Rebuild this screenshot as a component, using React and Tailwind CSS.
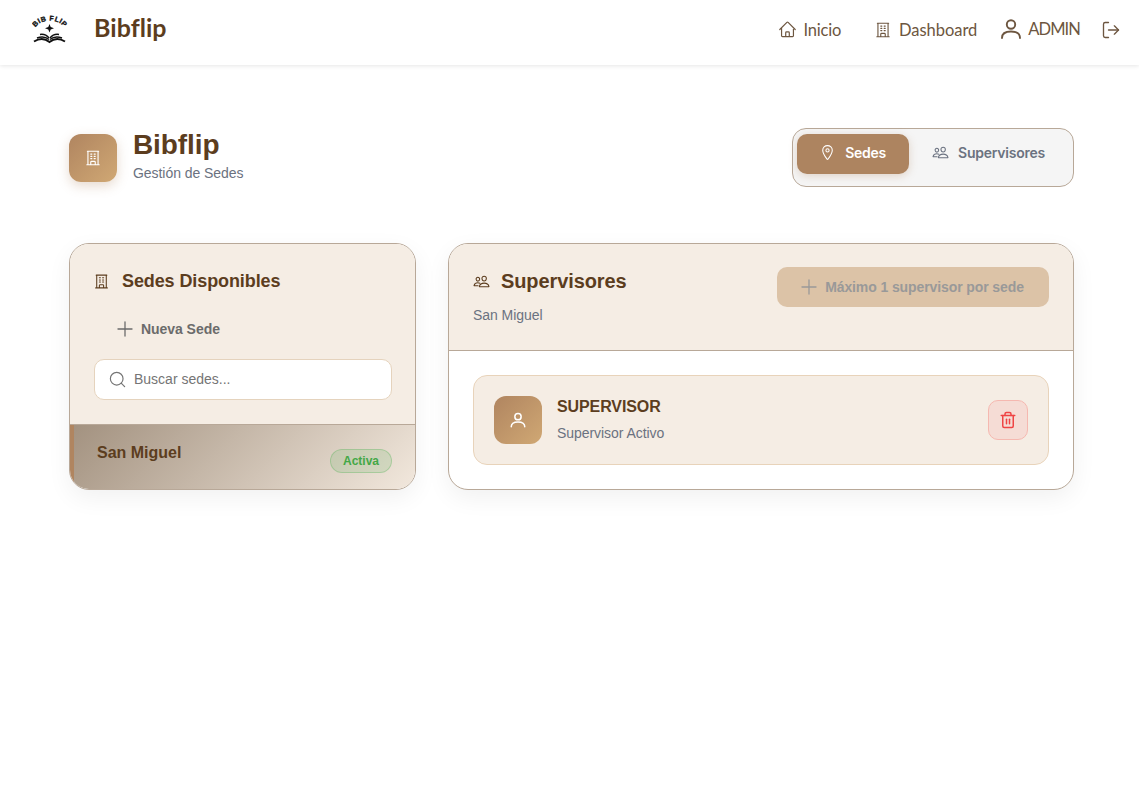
import React from 'react';
import { LogOut, Plus, Search, Trash2 } from 'lucide-react';
import { HiOutlineHome, HiOutlineBuildingOffice } from 'react-icons/hi2';
import { IoPeopleOutline, IoLocationOutline } from 'react-icons/io5';

const arial = { fontFamily: '"Liberation Sans", Arial, sans-serif' };
const inter = { fontFamily: 'Inter, sans-serif' };

// Small book + star logo, drawn by hand
const Logo = () => (
  <svg width="36" height="30" viewBox="0 0 36 30" className="block">
    <defs>
      <path id="logoArc" d="M4 13 C 9 5, 25 4, 32 13" />
    </defs>
    <text fontSize="7" fontWeight="700" fill="#111" stroke="#111" strokeWidth="0.35" letterSpacing="0.5" fontFamily="Liberation Sans, sans-serif">
      <textPath href="#logoArc" startOffset="50%" textAnchor="middle">BIB FLIP</textPath>
    </text>
    <path d="M17.5 10 L18.7 13 L22 14.2 L18.7 15.4 L17.5 18.6 L16.3 15.4 L13 14.2 L16.3 13 Z" fill="#111" />
    <g fill="none" stroke="#111" strokeWidth="1.5">
      <path d="M2 27.5 C7 24.5 13 24.5 17.5 28 C22 24.5 28 24.5 33 27.5" strokeWidth="2" />
      <path d="M5 24 C9 22.5 14 23 17 25.5" />
      <path d="M8 20.5 C11 20 15 21.5 17 24" />
      <path d="M30 24 C26 22.5 21 23 18 25.5" />
      <path d="M27 20.5 C24 20 20 21.5 18 24" />
    </g>
  </svg>
);

// Wide-shouldered person, none of the icon sets has this exact shape
const PersonIcon = ({ size, strokeWidth, className }) => (
  <svg width={size} height={size} viewBox="0 0 24 24" fill="none" stroke="currentColor" strokeWidth={strokeWidth} strokeLinecap="round" className={className}>
    <circle cx="12" cy="7.5" r="4.2" />
    <path d="M3 21 C3 16 7 14.5 12 14.5 C17 14.5 21 16 21 21" />
  </svg>
);

const NavBar = () => (
  <header className="h-[65px] bg-white shadow-[0_1px_4px_rgba(0,0,0,0.1)] flex items-center pl-[32px] pr-[18px] text-[#6d5640]" style={{ fontFamily: 'Lato, sans-serif' }}>
    <div className="mb-[7px]"><Logo /></div>
    <span className="ml-[26px] mb-[11px] text-[25px] leading-8 font-bold text-[#5c3d1e] tracking-[0.05px]">Bibflip</span>
    <nav className="ml-auto mb-[6px] flex items-center text-[16.5px] leading-6">
      <HiOutlineHome size={19} />
      <span className="ml-[6px] tracking-[-0.2px]">Inicio</span>
      <HiOutlineBuildingOffice size={18} className="ml-[33px]" />
      <span className="ml-[7px] tracking-[-0.05px]">Dashboard</span>
      <PersonIcon size={24} strokeWidth={1.9} className="ml-[22px] mb-[2px]" />
      <span className="ml-[5px] mb-[2px] tracking-[-0.9px]">ADMIN</span>
      <LogOut size={20} strokeWidth={1.6} className="ml-[21px]" />
    </nav>
  </header>
);

const PageTitle = () => (
  <div className="flex items-start justify-between w-[1005px]">
    <div className="flex items-center gap-4 mt-[3px]">
      <div className="w-12 h-12 mt-[1px] rounded-[12px] bg-gradient-to-br from-[#b08560] to-[#d0a874] shadow-[0_4px_12px_rgba(176,133,96,0.3)] flex items-center justify-center">
        <HiOutlineBuildingOffice size={18} color="#fff" />
      </div>
      <div className="-mt-[2px]">
        <h1 className="text-[28px] leading-[32px] font-bold text-[#5c3d1e] tracking-[-0.1px]">Bibflip</h1>
        <p className="text-[14px] leading-5 mt-[2px] text-[#6b7280] tracking-[-0.05px]">Gestión de Sedes</p>
      </div>
    </div>
    <div className="flex p-1 pt-[5px] h-[59px] w-[282px] rounded-[14px] bg-[#f5f5f5] border border-[#b8a898]">
      <button className="w-[112px] h-10 pb-[3px] pr-[1px] rounded-[10px] bg-[#ad8460] text-white flex items-center justify-center gap-[9px] text-[14px] font-semibold tracking-[-0.3px] shadow-[0_2px_8px_rgba(176,133,96,0.3)]" style={inter}>
        <IoLocationOutline size={17} />
        Sedes
      </button>
      <button className="flex-1 h-10 pb-[3px] pr-[1px] flex items-center justify-center gap-[9px] text-[14px] font-semibold text-[#6b7280] tracking-[-0.25px]" style={inter}>
        <IoPeopleOutline size={17} />
        Supervisores
      </button>
    </div>
  </div>
);

const SedesCard = () => (
  <section className="rounded-[20px] border border-[#b8a898] bg-white overflow-hidden shadow-[0_8px_24px_rgba(0,0,0,0.06)]">
    <div className="bg-[#f5ede4] border-b border-[#b8a898] pl-6 pr-[23px] pt-[23px] h-[181px]">
      <div className="flex items-center gap-[12px] h-7 -ml-[1px]">
        <HiOutlineBuildingOffice size={17} color="#5c3d1e" />
        <h2 className="text-[18px] font-bold text-[#5c3d1e] tracking-[-0.1px]">Sedes Disponibles</h2>
      </div>
      <button className="mt-[22px] ml-[19px] h-[24px] flex items-center gap-[4px] text-[14px] font-bold text-[#6b6b6b] tracking-[-0.05px]">
        <Plus size={24} strokeWidth={1.3} />
        Nueva Sede
      </button>
      <div className="mt-[18px] h-[41px] rounded-[10px] border border-[#e5d3bd] bg-white flex items-center pl-[13px] gap-[7px] text-[14px] text-[#757575]">
        <Search size={19} strokeWidth={1.5} />
        Buscar sedes...
      </div>
    </div>
    <div className="h-[64px] relative border-l-4 border-[#b08560] bg-[linear-gradient(135deg,#a39280,#f2e8dd)] pl-6 pt-[16px]">
      <h3 className="text-[16px] leading-6 font-bold text-[#5c3d1e] -ml-[1px]">San Miguel</h3>
      <span className="absolute right-[23px] top-[24px] h-[24px] w-[62px] rounded-full bg-[#4caf50]/15 border border-[#4caf50]/30 text-[#43a847] text-[12px] font-bold flex items-center justify-center">Activa</span>
    </div>
  </section>
);

const SupervisoresCard = () => (
  <section className="rounded-[20px] border border-[#b8a898] bg-white overflow-hidden shadow-[0_8px_24px_rgba(0,0,0,0.06)]">
    <div className="bg-[#f5ede4] border-b border-[#b8a898] h-[107px] px-6 pt-[23px] flex justify-between">
      <div>
        <div className="flex items-center gap-[11px] h-[28px]">
          <IoPeopleOutline size={17} color="#5c3d1e" />
          <h2 className="text-[20px] font-bold text-[#5c3d1e] tracking-[-0.1px]">Supervisores</h2>
        </div>
        <p className="text-[14px] leading-5 mt-[10px] text-[#6b7280] tracking-[-0.05px]">San Miguel</p>
      </div>
      <button className="h-10 w-[272px] pr-[5px] rounded-[10px] bg-[#dcc3a7] text-[#999999] text-[14px] font-bold tracking-[-0.1px] flex items-center justify-center gap-[4px]">
        <Plus size={24} strokeWidth={1.3} />
        Máximo 1 supervisor por sede
      </button>
    </div>
    <div className="p-6">
      <div className="h-[90px] rounded-[14px] border border-[#e8d3ba] bg-[#f5ede4] flex items-center px-5">
        <div className="w-12 h-12 rounded-[12px] bg-gradient-to-br from-[#b08560] to-[#d0a874] flex items-center justify-center text-white">
          <PersonIcon size={18} strokeWidth={2} />
        </div>
        <div className="ml-[15px] -mt-[2px]">
          <h3 className="text-[16px] leading-6 font-bold text-[#5c3d1e] tracking-[-0.1px]">SUPERVISOR</h3>
          <p className="text-[14px] leading-5 mt-[4px] text-[#6b7280] tracking-[-0.05px]">Supervisor Activo</p>
        </div>
        <button className="ml-auto w-10 h-10 rounded-[10px] bg-[#f5dcd5] border border-[#f5b8b0] flex items-center justify-center">
          <Trash2 size={18} color="#ef4444" strokeWidth={2} />
        </button>
      </div>
    </div>
  </section>
);

export default function App() {
  return (
    <div className="min-h-[800px] bg-white" style={arial}>
      <NavBar />
      <main className="pl-[69px] pt-[63px]">
        <PageTitle />
        <div className="mt-[56px] grid grid-cols-[347px_626px] gap-[32px] items-start">
          <SedesCard />
          <SupervisoresCard />
        </div>
      </main>
    </div>
  );
}
